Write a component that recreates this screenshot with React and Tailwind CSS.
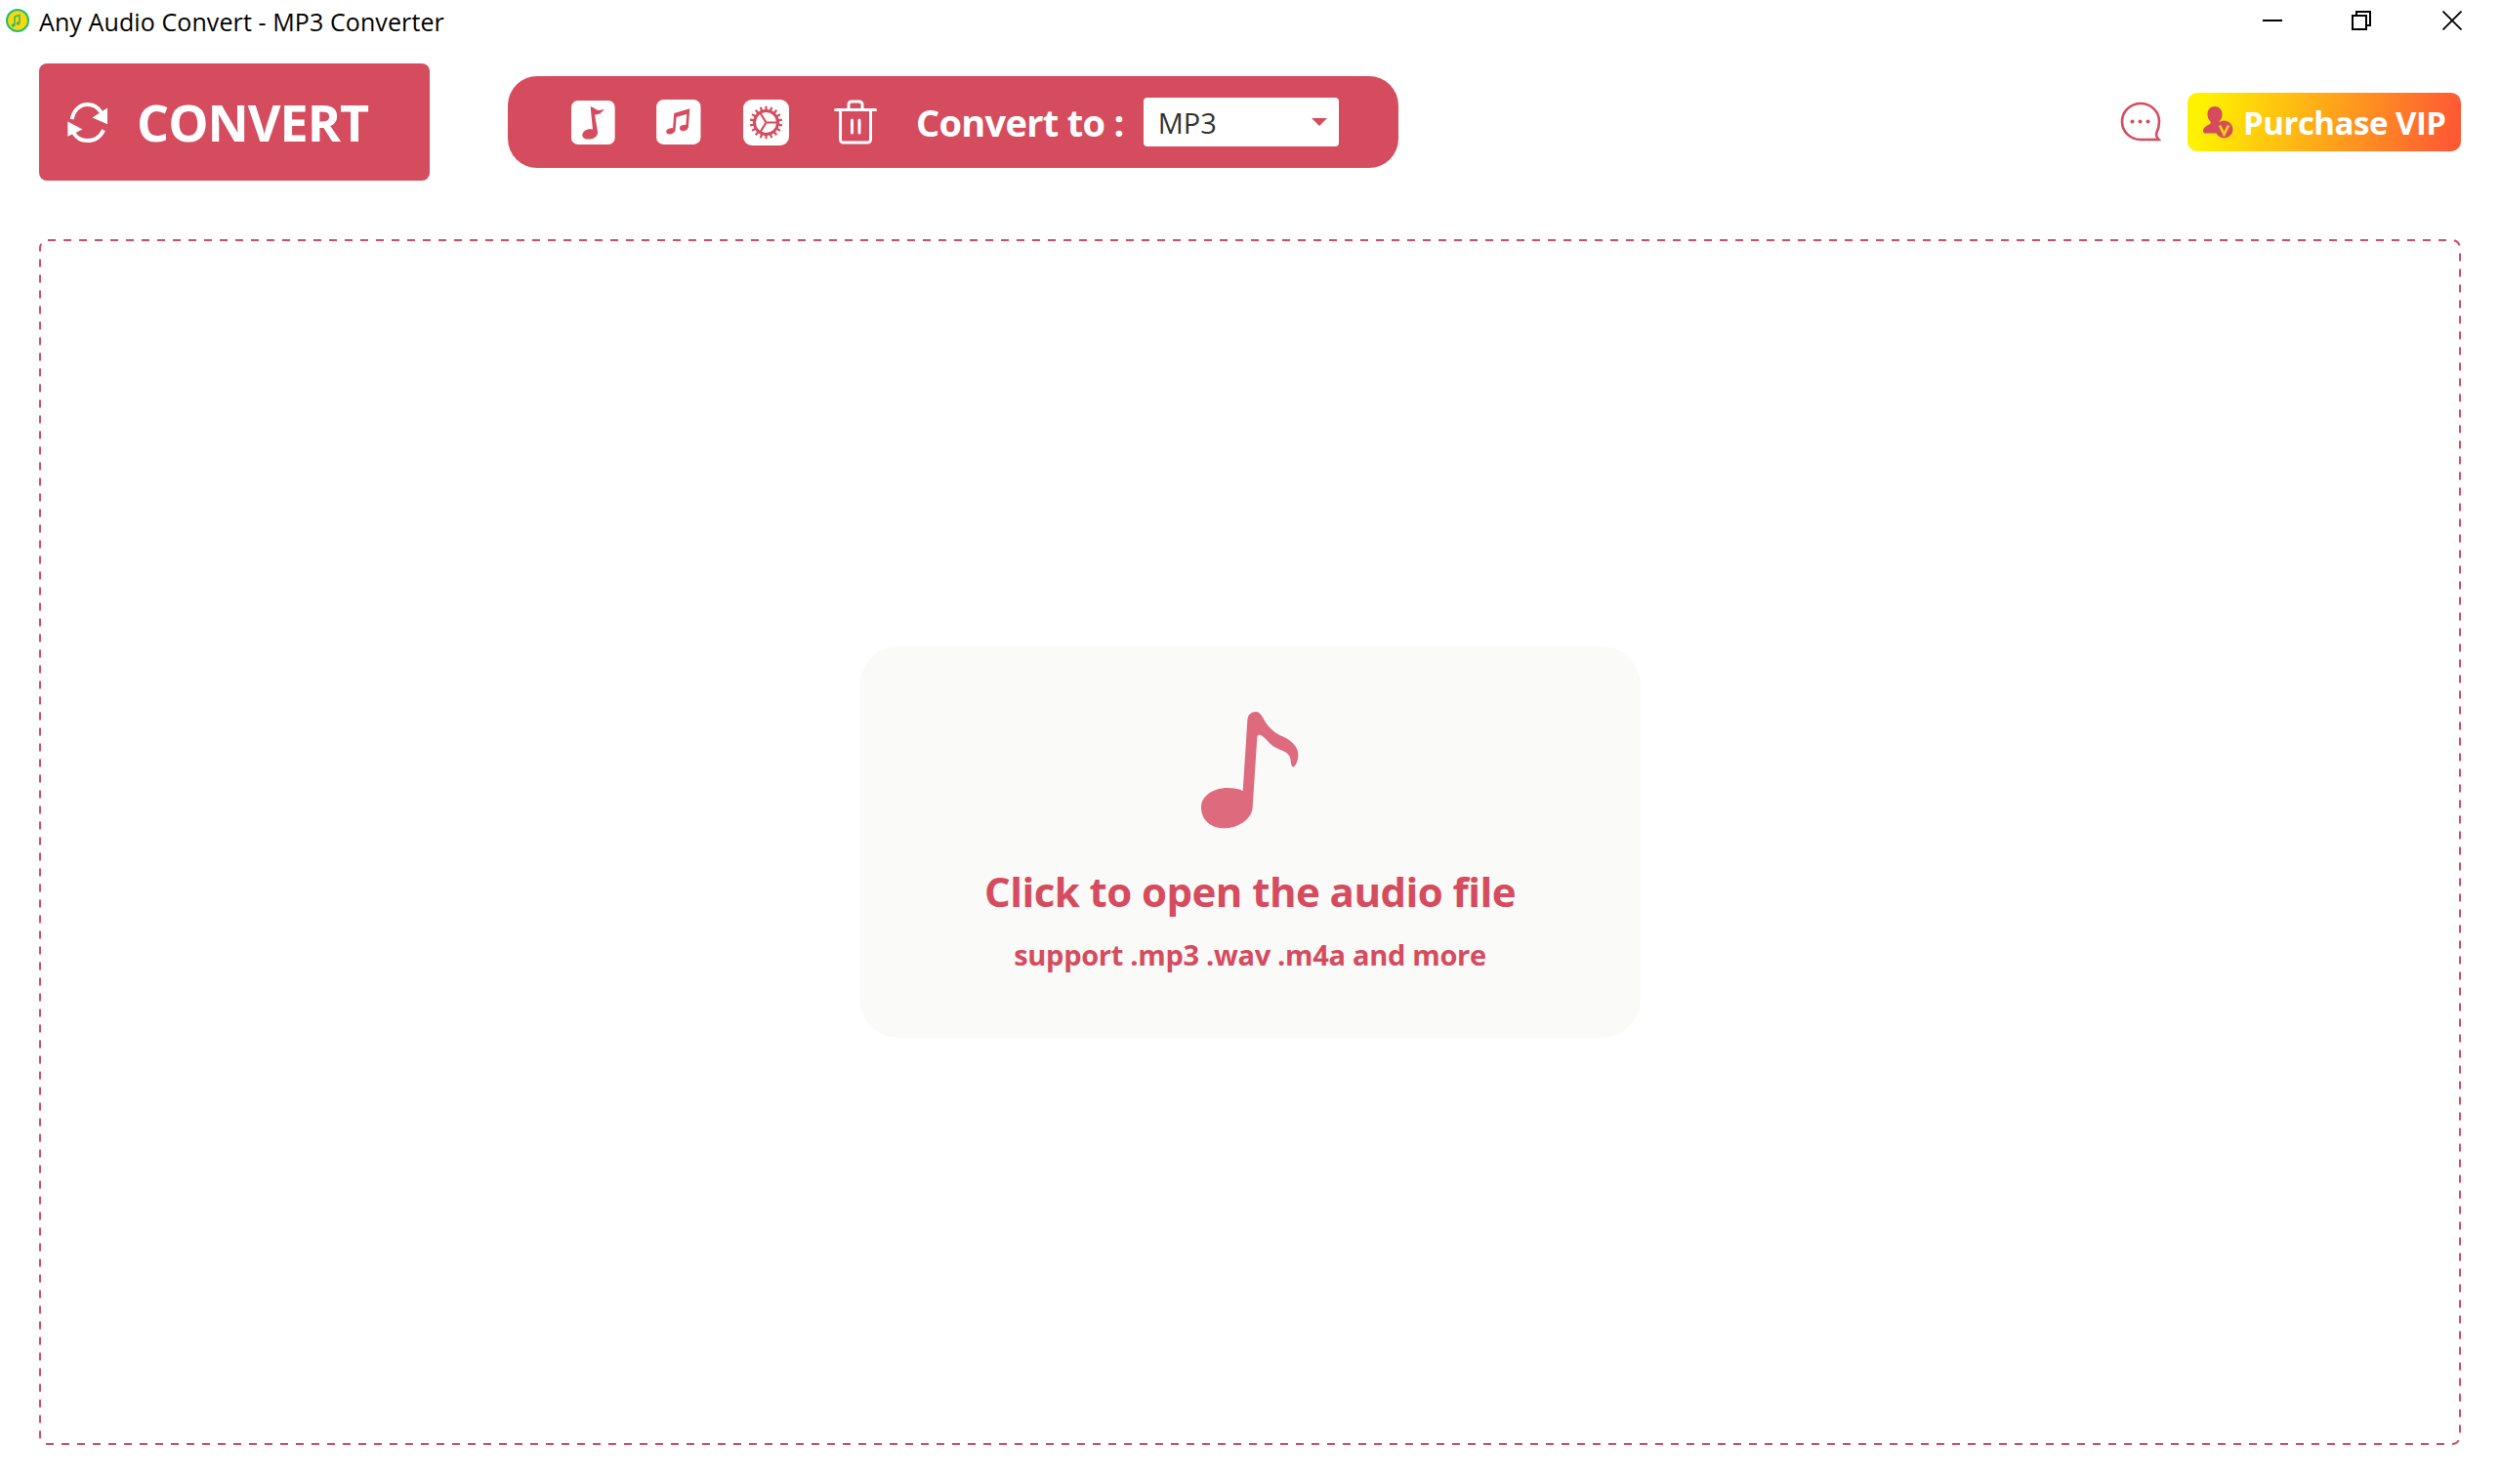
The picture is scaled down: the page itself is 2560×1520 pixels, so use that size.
import React from "react";

const font = { fontFamily: '"Open Sans","Noto Sans",sans-serif' };

function Reload() {
  return (
    <svg width="43" height="43" viewBox="205 310 130 130" fill="none">
      <path d="M222 365C228 335 248 319 270 319C288 319 303 328 313 344" stroke="#fff" strokeWidth="12" />
      <path d="M332 330V380L285 360Z" fill="#fff" />
      <path d="M320 398C310 420 292 431 270 431C250 431 235 422 226 404" stroke="#fff" strokeWidth="12" />
      <path d="M209 372V418L255 396Z" fill="#fff" />
    </svg>
  );
}

function NoteTile() {
  return (
    <svg width="45" height="45" viewBox="227 137 133 133">
      <rect x="227" y="137" width="132" height="133" rx="20" fill="#fff" />
      <path d="M285 155L297 160C305 168 315 168 327 163C320 175 310 180 298 180L307 232C308 245 295 254 278 254C265 254 259 247 261 238C264 227 278 221 292 224Z" fill="#d54c5f" />
    </svg>
  );
}

function MusicTile() {
  return (
    <svg width="46" height="46" viewBox="487 135 137 138">
      <rect x="487" y="135" width="136" height="138" rx="22" fill="#fff" />
      <path d="M541 232L545 180L585 168L581 222" fill="none" stroke="#d54c5f" strokeWidth="8" />
      <path d="M544 184L585 172" fill="none" stroke="#d54c5f" strokeWidth="12" />
      <ellipse cx="530" cy="232" rx="13" ry="9" fill="#d54c5f" transform="rotate(-15 530 232)" />
      <ellipse cx="571" cy="222" rx="13" ry="9" fill="#d54c5f" transform="rotate(-15 571 222)" />
    </svg>
  );
}

function GearTile() {
  const teeth = Array.from({ length: 18 }, (_, i) => i * 20);
  return (
    <svg width="47" height="47" viewBox="0 0 47 47">
      <rect width="47" height="47" rx="9" fill="#fff" />
      <g stroke="#d54c5f" fill="none">
        <circle cx="23.500" cy="23.500" r="12" strokeWidth="3" />
        {teeth.map((a) => (
          <line key={a} x1="23.500" y1="11" x2="23.500" y2="6.800" strokeWidth="2.200" transform={`rotate(${a} 23.500 23.500)`} />
        ))}
        <path d="M23.500 23.500L17 13M23.500 23.500h12M23.500 23.500l-6.500 10.500" strokeWidth="2.200" />
      </g>
    </svg>
  );
}

function Trash() {
  return (
    <svg width="44" height="46" viewBox="0 0 44 46" fill="none" stroke="#fff" strokeWidth="3" strokeLinecap="round" strokeLinejoin="round">
      <path d="M1.500 10.500h41" />
      <path d="M6.500 11v30a3 3 0 0 0 3 3h25a3 3 0 0 0 3-3V11" />
      <path d="M15 10V5a3 3 0 0 1 3-3h8a3 3 0 0 1 3 3v5" />
      <path d="M18.500 21v13M26 21v13" />
    </svg>
  );
}

function Chat() {
  return (
    <svg width="42" height="42" viewBox="0 0 42 42" fill="none">
      <path d="M21 2C10.500 2 2 10 2 20.500S10.500 39 21 39h18.500c-1.500-1.500-2.800-4-2.300-6.500C39 29 40 25 40 20.500 40 10 31.500 2 21 2z" stroke="#d54c5f" strokeWidth="2.600" />
      <circle cx="12.500" cy="20.500" r="2" fill="#d54c5f" />
      <circle cx="20.500" cy="20.500" r="2" fill="#d54c5f" />
      <circle cx="28.500" cy="20.500" r="2" fill="#d54c5f" />
    </svg>
  );
}

function VipUser() {
  return (
    <svg width="32" height="33" viewBox="0 0 32 33">
      <path d="M12 0c4.500 0 7.500 3.500 7.500 8 0 3-1 5.500-3 7.500 0 1.500.5 2.500 1.500 3-2.500 2-3.500 5-3 9H2c-1.500 0-2-1-2-2.500 0-3 3-5 7-7 .8-.5 1-1.500.5-2.500C5.500 13.500 4.500 11 4.500 8 4.500 3.500 7.500 0 12 0z" fill="#d54c5f" />
      <circle cx="21.500" cy="23.500" r="9" fill="#d54c5f" />
      <path d="M17 19.500l4.500 9 4.500-9" fill="none" stroke="#ffd60a" strokeWidth="2.600" />
    </svg>
  );
}

function BigNote() {
  return (
    <svg width="200" height="150" viewBox="0 0 600 450">
      <path d="M292 85C292 65 305 57 318 57C330 57 337 70 345 85C360 110 380 125 400 133C430 147 448 165 448 190C448 210 438 227 433 227C425 227 427 205 422 195C415 180 395 175 380 168C360 158 350 140 335 130C328 125 323 128 322 135L308 350C305 390 260 415 222 415C180 415 150 390 150 350C150 315 190 290 232 291C250 291 268 295 278 300Z" fill="#dd6b7d" />
    </svg>
  );
}

export default function App() {
  return (
    <div className="w-[2560px] h-[1520px] bg-white flex flex-col" style={font}>
      <div className="h-[40px] flex items-center justify-between pl-[6px] pr-[39px]">
        <div className="flex items-center gap-[10px] text-[25px] leading-[40px] text-black h-[40px] tracking-[0.1px] mt-[3px]">
          <svg width="24" height="24" viewBox="0 0 24 24" className="-mt-[1px]">
            <circle cx="12" cy="12" r="11" fill="#ffd60a" stroke="#1fbf75" strokeWidth="2" />
            <path d="M9 8l5-1.500v8M9 8v9" stroke="#1fbf75" strokeWidth="1.500" fill="none" />
            <circle cx="7.500" cy="17" r="1.800" fill="#1fbf75" />
            <circle cx="12.500" cy="15" r="1.800" fill="#1fbf75" />
          </svg>
          <span>Any Audio Convert - MP3 Converter</span>
        </div>
        <div className="flex items-center gap-[71px] mt-[2px]">
          <svg width="20" height="20" viewBox="0 0 20 20"><path d="M0 10h20" stroke="#000" strokeWidth="2" /></svg>
          <svg width="20" height="20" viewBox="0 0 20 20" fill="none" stroke="#000" strokeWidth="2"><rect x="1" y="5" width="14" height="14" /><path d="M5 5V1h14v14h-4" /></svg>
          <svg width="20" height="20" viewBox="0 0 20 20" fill="none" stroke="#000" strokeWidth="1.800" className="ml-[2px]"><path d="M0.500 0.500l19 19M19.500 0.500l-19 19" /></svg>
        </div>
      </div>

      <div className="h-[120px] mt-[25px] pl-[40px] pr-[40px] flex items-center">
        <div className="w-[400px] h-[120px] rounded-[8px] bg-[#d54c5f] flex items-center pl-[28px] gap-[29px] text-white">
          <Reload />
          <span className="text-[52px] font-bold leading-none tracking-[-1px]">CONVERT</span>
        </div>
        <div className="ml-[80px] w-[912px] h-[94px] rounded-[30px] bg-[#d54c5f] flex items-center pl-[65px]">
          <NoteTile />
          <div className="w-[42px]" />
          <MusicTile />
          <div className="w-[43px]" />
          <GearTile />
          <div className="w-[46px]" />
          <Trash />
          <span className="ml-[40px] text-[38px] font-bold text-white leading-none whitespace-nowrap tracking-[-0.7px]">Convert to :</span>
          <div className="ml-[20px] w-[200px] h-[50px] bg-white rounded-[4px] flex items-center justify-between pl-[15px] pr-[12px]">
            <span className="text-[29px] text-[#333] leading-none">MP3</span>
            <span className="w-0 h-0 border-x-[8px] border-x-transparent border-t-[8px] border-t-[#d54c5f]" />
          </div>
        </div>
        <div className="ml-auto flex items-center">
          <Chat />
          <div className="ml-[27px] w-[280px] h-[60px] rounded-[10px] bg-[linear-gradient(100deg,#fff200_6%,#ff5a33_96%)] flex items-center pl-[16px] gap-[9px]">
            <VipUser />
            <span className="text-[33px] font-bold text-white leading-none whitespace-nowrap tracking-[-0.5px]">Purchase VIP</span>
          </div>
        </div>
      </div>

      <div className="relative ml-[40px] mt-[60px] w-[2480px] h-[1235px] flex items-center justify-center">
        <svg className="absolute inset-0" width="2480" height="1235" fill="none">
          <rect x="1" y="1" width="2478" height="1233" rx="8" stroke="#d54c5f" strokeWidth="2" strokeDasharray="8 8" />
        </svg>
        <div className="w-[800px] h-[401px] rounded-[40px] bg-[#fafaf8] flex flex-col items-center pt-[48px]">
          <BigNote />
          <div className="mt-[25px] text-[42px] font-bold leading-[56px] text-[#d54c5f] whitespace-nowrap tracking-[-0.55px]">Click to open the audio file</div>
          <div className="mt-[17px] text-[29px] font-bold leading-[40px] text-[#d54c5f] whitespace-nowrap tracking-[-0.3px]">support .mp3 .wav .m4a and more</div>
        </div>
      </div>
    </div>
  );
}
